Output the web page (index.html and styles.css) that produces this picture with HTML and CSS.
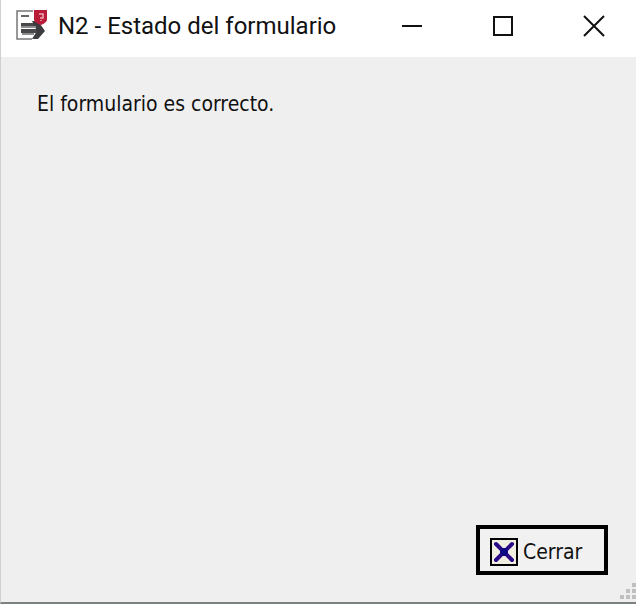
FILE: index.html
```
<!DOCTYPE html>
<html lang="es">

<head>
    <meta charset="UTF-8">
    <meta name="viewport" content="width=device-width, initial-scale=1.0">
    <title>N2 - Estado del formulario</title>
    <link rel="stylesheet" href="styles.css">
</head>

<body>
    <div class="window">
        <header class="titlebar">
            <svg class="app-icon" viewBox="0 0 32 32" aria-hidden="true">
                <path d="M17 1H1v28h15" fill="none" stroke="#777" stroke-width="1.5" />
                <path d="M5 6h8" stroke="#666" stroke-width="2" />
                <path d="M5 13h14v3H5zM5 19h16v4H5z" fill="#48484a" />
                <path d="M16 11h6l7 10-7 8h-6l5-8z" fill="#3c3c3e" />
                <path d="M5 17h15M6 24h12" stroke="#8c8c8c" stroke-width="2" />
                <path d="M18 0h13v10q-1 3-6 5-6-2-7-5z" fill="#b91c38" />
                <path d="M23 4h4v4h-3m1 3v-1" fill="none" stroke="#f0a9b4" stroke-width="1.5" />
            </svg>
            <h1 class="title">N2 - Estado del formulario</h1>
            <div class="controls">
                <button type="button" class="control" aria-label="Minimizar">
                    <svg viewBox="0 0 22 22"><path d="M1 11h20" /></svg>
                </button>
                <button type="button" class="control" aria-label="Maximizar">
                    <svg viewBox="0 0 22 22"><path d="M2 2h18v18H2z" /></svg>
                </button>
                <button type="button" class="control" aria-label="Cerrar ventana">
                    <svg viewBox="0 0 22 22"><path d="M1 1l20 20M21 1L1 21" /></svg>
                </button>
            </div>
        </header>
        <main class="content">
            <p class="message">El formulario es correcto.</p>
        </main>
        <footer class="footer">
            <button type="button" class="close-button">
                <svg class="close-icon" viewBox="0 0 28 28" aria-hidden="true">
                    <path d="M1 1h26v26H1z" fill="#efeee0" stroke="#000" stroke-width="2" />
                    <path d="M6 6l16 16M22 6L6 22" stroke="#2a0a86" stroke-width="4" stroke-linecap="round" />
                    <circle cx="14" cy="14" r="4" fill="#0b0780" />
                </svg>
                <span>Cerrar</span>
            </button>
        </footer>
        <svg class="grip" viewBox="0 0 16 16" aria-hidden="true">
            <path d="M12 0h4v4h-4zM6 6h4v4H6zM12 6h4v4h-4zM0 12h4v4H0zM6 12h4v4H6zM12 12h4v4h-4z" fill="#bfbfbf" />
        </svg>
    </div>
</body>

</html>
```
FILE: styles.css
```
* {
    box-sizing: border-box;
}

body {
    margin: 0;
    font-family: "DejaVu Sans Condensed", "Noto Sans", sans-serif;
    color: #111;
}

.window {
    position: relative;
    display: flex;
    flex-direction: column;
    min-height: 100vh;
    background-color: #efefef;
    border-left: 1px solid #d0d0d0;
    border-bottom: 2px solid #7c8280;
}

.titlebar {
    display: flex;
    align-items: center;
    height: 57px;
    padding-left: 15px;
    padding-bottom: 6px;
    background-color: #fff;
}

.app-icon {
    width: 32px;
    height: 32px;
}

.title {
    flex: 1;
    margin: 0 0 0 10px;
    font-family: Roboto, "Noto Sans", sans-serif;
    font-size: 24px;
    font-weight: normal;
    line-height: 32px;
    white-space: nowrap;
}

.controls {
    display: flex;
    gap: 7px;
}

.control {
    display: flex;
    align-items: center;
    justify-content: center;
    width: 84px;
    height: 50px;
    padding: 0;
    background: none;
    border: 0;
}

.control svg {
    width: 22px;
    height: 22px;
    fill: none;
    stroke: #111;
    stroke-width: 2;
}

.control:hover {
    background-color: #e5e5e5;
}

.content {
    flex: 1;
    padding: 33px 36px;
}

.message {
    margin: 0;
    font-size: 21px;
    line-height: 28px;
}

.footer {
    display: flex;
    justify-content: flex-end;
    padding: 0 28px 27px;
}

.close-button {
    display: flex;
    align-items: center;
    gap: 5px;
    width: 132px;
    height: 50px;
    padding: 4px 10px 0;
    background-color: #f1f1f1;
    border: 4px solid #000;
    color: #111;
    font-family: inherit;
    font-size: 21px;
    line-height: 28px;
}

.close-icon {
    width: 28px;
    height: 28px;
}

.grip {
    position: absolute;
    right: 0;
    bottom: 3px;
    width: 16px;
    height: 16px;
}
```
